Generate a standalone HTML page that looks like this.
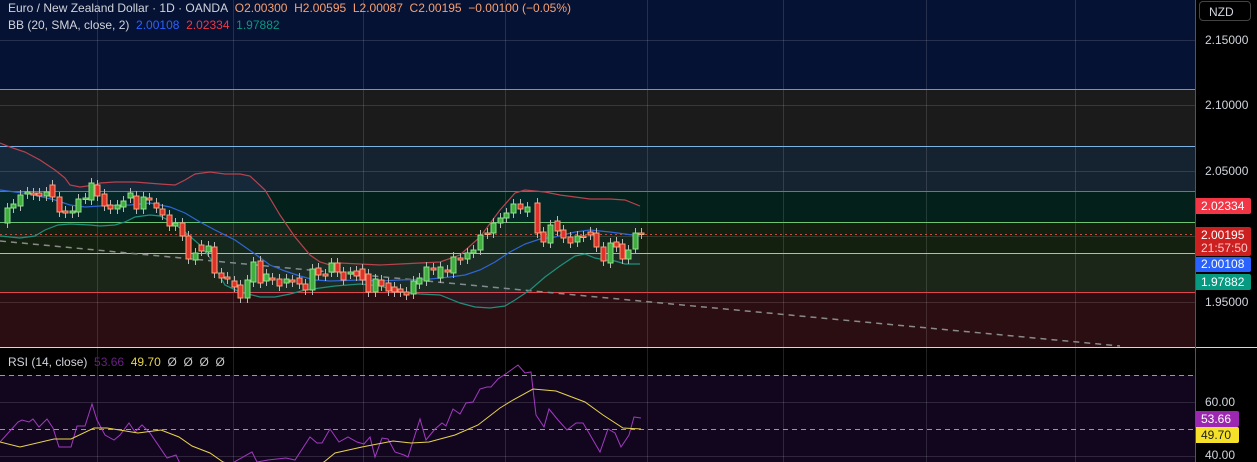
<!DOCTYPE html><html><head><meta charset="utf-8"><style>
body{margin:0;width:1257px;height:462px;overflow:hidden;background:#000;font-family:"Liberation Sans",sans-serif}
.t{position:absolute;font-size:12px;white-space:nowrap}
.lb{position:absolute;left:1196px;width:55px;font-size:12px;color:#fff;padding-left:5px;box-sizing:border-box;border-radius:0 2px 2px 0}
</style></head><body>
<svg id="s" width="1257" height="462" style="position:absolute;left:0;top:0">
<rect x="0" y="0" width="1195" height="89" fill="#061233"/>
<rect x="0" y="89" width="1195" height="57" fill="#1b1b1c"/>
<rect x="0" y="146" width="1195" height="45" fill="#152230"/>
<rect x="0" y="191" width="1195" height="31" fill="#04201b"/>
<rect x="0" y="222" width="1195" height="31" fill="#14200f"/>
<rect x="0" y="253" width="1195" height="39" fill="#1b2619"/>
<rect x="0" y="292" width="1195" height="55" fill="#2a0e11"/>
<rect x="0" y="348" width="1195" height="27" fill="#000"/>
<rect x="0" y="375" width="1195" height="87" fill="#12061f"/>
<g stroke="#ffffff" stroke-opacity="0.13" stroke-width="1">
<path d="M0 40.5H1195M0 105.5H1195M0 171.5H1195M0 236.5H1195M0 302.5H1195M0 402.5H1195M0 456.5H1195"/>
<path d="M97.5 0V462M233.5 0V462M363.5 0V462M505.5 0V462M647.5 0V462M783.5 0V462M926.5 0V462M1075.5 0V462"/>
</g>
<path d="M0 89.5H1195" stroke="#8a8f99"/>
<path d="M0 146.5H1195" stroke="#7fb3e6"/>
<path d="M0 191.5H1195" stroke="#1e9d8a"/>
<path d="M0 222.5H1195" stroke="#6fc36f"/>
<path d="M0 253.5H1195" stroke="#8fd48a"/>
<path d="M0 292.5H1195" stroke="#e0454f"/>
<path d="M0 234.5H1195" stroke="#d04a3a" stroke-dasharray="2 3"/>
<path d="M0 241L1120 346" stroke="#8a8a8a" stroke-width="1.5" stroke-dasharray="6 5"/>
<path d="M0 347.5H1257" stroke="#d8d8d8"/>
<path d="M1195.5 0V462" stroke="#555"/>
<path d="M0 375.5H1195M0 429.5H1195" stroke="#bdbdbd" stroke-dasharray="5 4" stroke-opacity="0.8"/>
<g id="bb"></g><g id="cd"></g>
<polyline id="rp" fill="none" stroke="#a23ac0" stroke-width="1"/>
<polyline id="ry" fill="none" stroke="#e8d44d" stroke-width="1"/>
</svg>
<div class="t" style="left:8px;top:1px;color:#d1d4dc">Euro / New Zealand Dollar · 1D · OANDA&nbsp; <span style="color:#f7a071">O2.00300&nbsp; H2.00595&nbsp; L2.00087&nbsp; C2.00195&nbsp; −0.00100 (−0.05%)</span></div>
<div class="t" style="left:8px;top:18px;color:#d1d4dc">BB (20, SMA, close, 2)&nbsp; <span style="color:#2962ff">2.00108</span>&nbsp; <span style="color:#f23645">2.02334</span>&nbsp; <span style="color:#089981">1.97882</span></div>
<div class="t" style="left:8px;top:355px;color:#d1d4dc">RSI (14, close)&nbsp; <span style="color:#6a1f86">53.66</span>&nbsp; <span style="color:#e8d44d">49.70</span>&nbsp; <span style="color:#c8c8c8">Ø&nbsp; Ø&nbsp; Ø&nbsp; Ø</span></div>
<div style="position:absolute;left:1199px;top:1px;width:52px;height:20px;border:1px solid #444;border-radius:4px;box-sizing:border-box;color:#d1d4dc;font-size:12px;padding:3px 0 0 9px">NZD</div>
<div class="t" style="left:1205px;top:33px;color:#d1d4dc">2.15000</div>
<div class="t" style="left:1205px;top:98px;color:#d1d4dc">2.10000</div>
<div class="t" style="left:1205px;top:164px;color:#d1d4dc">2.05000</div>
<div class="t" style="left:1205px;top:295px;color:#d1d4dc">1.95000</div>
<div class="lb" style="top:198px;height:16px;background:#f23645;line-height:16px">2.02334</div>
<div class="lb" style="top:227px;height:29px;background:#cc1f1f;line-height:13px;padding-top:2px">2.00195<br><span style="color:#ffc9c9">21:57:50</span></div>
<div class="lb" style="top:257px;height:15px;background:#2962ff;line-height:15px">2.00108</div>
<div class="lb" style="top:274px;height:16px;background:#089981;line-height:16px">1.97882</div>
<div class="t" style="left:1205px;top:395px;color:#d1d4dc">60.00</div>
<div class="lb" style="top:411px;height:16px;background:#9c27b0;line-height:16px;width:43px">53.66</div>
<div class="lb" style="top:427px;height:16px;background:#f5e12a;line-height:16px;width:43px;color:#222">49.70</div>
<div class="t" style="left:1205px;top:448px;color:#d1d4dc">40.00</div>
<script>
var NS="http://www.w3.org/2000/svg";
function el(p,t,a){var e=document.createElementNS(NS,t);for(var k in a)e.setAttribute(k,a[k]);p.appendChild(e);return e}
function pts(a){return a.map(function(p){return p[0]+","+p[1]}).join(" ")}
var up=[[0,143],[10,147],[25,152],[40,160],[55,170],[65,178],[70,185],[80,187],[95,185],[100,183],[115,182],[135,182],[160,184],[175,185],[185,180],[195,174],[210,172],[225,174],[240,174],[250,176],[265,190],[280,215],[295,237],[310,255],[320,262],[330,265],[340,263],[360,264],[380,265],[400,264],[420,263],[440,262],[460,255],[480,237],[500,210],[515,193],[525,190],[545,192],[560,195],[575,197],[590,199],[610,199],[625,200],[640,206]];
var md=[[0,190],[30,194],[55,200],[70,205],[85,207],[100,206],[130,205],[150,203],[170,207],[185,213],[200,222],[215,230],[235,240],[255,254],[270,265],[285,271],[300,276],[315,280],[330,281],[360,280],[380,281],[400,280],[430,279],[450,277],[465,275],[480,270],[495,262],[510,252],[525,244],[540,239],[555,237],[575,232],[590,230],[610,232],[625,234],[640,236]];
var lo=[[0,236],[20,238],[35,236],[45,230],[58,225],[70,224],[90,225],[100,226],[115,225],[125,222],[135,217],[150,215],[160,216],[172,222],[185,232],[200,245],[210,258],[218,273],[225,285],[240,292],[260,297],[275,297],[290,294],[305,290],[320,288],[335,286],[360,284],[380,286],[400,292],[420,294],[440,295],[460,303],[475,307],[490,308],[505,306],[515,300],[530,290],[545,277],[560,266],[575,256],[585,254],[595,258],[605,260],[615,261],[625,264],[640,264]];
var bb=document.getElementById("bb");
el(bb,"polygon",{points:pts(up.concat(lo.slice().reverse())),fill:"#2196f3","fill-opacity":"0.06"});
el(bb,"polyline",{points:pts(up),fill:"none",stroke:"#b8424e","stroke-width":"1.2"});
el(bb,"polyline",{points:pts(md),fill:"none",stroke:"#2f66d6","stroke-width":"1.2"});
el(bb,"polyline",{points:pts(lo),fill:"none",stroke:"#1f8f7c","stroke-width":"1.2"});
var C=[[7,223,208],[13,208,204],[20,206,195],[27,194,192],[33,193,195],[39,193,196],[46,196,192],[52,185,197],[59,197,212],[65,211,213],[72,213,211],[78,212,199],[85,199,198],[91,200,183],[97,185,196],[104,194,206],[110,205,209],[117,209,205],[123,207,201],[130,198,193],[136,196,209],[143,209,197],[149,198,200],[156,203,208],[162,209,215],[169,215,226],[175,226,223],[182,223,236],[188,236,259],[195,260,253],[201,245,251],[208,252,246],[214,247,273],[221,273,278],[227,277,279],[234,281,287],[240,285,298],[247,298,280],[253,282,262],[260,261,283],[266,281,274],[272,278,280],[279,279,286],[286,283,279],[292,280,282],[299,278,284],[305,284,290],[312,290,269],[318,268,275],[325,274,276],[331,272,263],[337,263,272],[343,272,280],[350,274,272],[356,271,276],[362,269,280],[368,274,292],[375,292,279],[381,280,286],[388,283,291],[394,287,292],[400,289,292],[406,292,295],[413,294,281],[419,284,278],[426,281,267],[433,268,270],[440,278,267],[447,270,272],[453,273,257],[460,258,260],[467,259,253],[473,253,250],[480,250,235],[487,233,234],[493,233,223],[500,223,218],[506,218,213],[513,213,204],[520,204,209],[527,212,207],[537,203,233],[543,232,242],[550,243,225],[557,221,231],[563,230,238],[570,237,243],[577,242,236],[583,236,237],[590,232,235],[596,233,247],[603,247,261],[610,263,243],[616,242,247],[622,244,259],[628,259,250],[635,249,233],[641,233,234]];
var cd=document.getElementById("cd");
C.forEach(function(c){var x=c[0],o=c[1],cl=c[2],t=Math.min(o,cl),b=Math.max(o,cl),g=cl<o;
el(cd,"line",{x1:x+.5,x2:x+.5,y1:t-5,y2:b+5,stroke:"#b8b8b8","stroke-width":"1"});
el(cd,"rect",{x:x-2,y:t,width:5,height:Math.max(b-t,1.5),fill:g?"#3fae3f":"#e0302a",stroke:g?"#8fe08a":"#f7a27a","stroke-width":"1"});});
var rp=[[0,442],[18,422],[22,420],[29,422],[33,419],[39,427],[47,419],[53,428],[59,447],[71,447],[77,426],[85,426],[92,404],[97,420],[105,435],[114,440],[120,435],[129,423],[135,432],[142,425],[150,433],[167,458],[176,455],[182,468],[220,470],[252,452],[257,462],[268,460],[286,458],[295,460],[310,437],[317,443],[322,443],[330,429],[339,442],[348,437],[357,442],[364,444],[370,437],[375,457],[382,438],[388,439],[395,452],[404,455],[408,457],[420,419],[426,440],[435,429],[442,423],[446,426],[453,409],[460,414],[466,403],[473,402],[480,389],[487,387],[491,387],[498,379],[507,373],[518,365],[525,373],[531,372],[536,415],[544,427],[549,409],[558,420],[567,430],[576,423],[583,423],[589,433],[600,452],[608,429],[615,433],[621,447],[629,435],[634,417],[641,418]];
var ry=[[0,442],[20,447],[54,439],[71,439],[94,428],[107,428],[138,433],[161,430],[179,437],[192,446],[210,453],[223,462],[260,472],[300,472],[324,462],[335,453],[362,447],[393,441],[411,443],[429,442],[455,435],[478,425],[500,408],[513,400],[533,389],[556,391],[585,402],[603,415],[623,428],[641,429]];
document.getElementById("rp").setAttribute("points",pts(rp));
document.getElementById("ry").setAttribute("points",pts(ry));
</script>
</body></html>
